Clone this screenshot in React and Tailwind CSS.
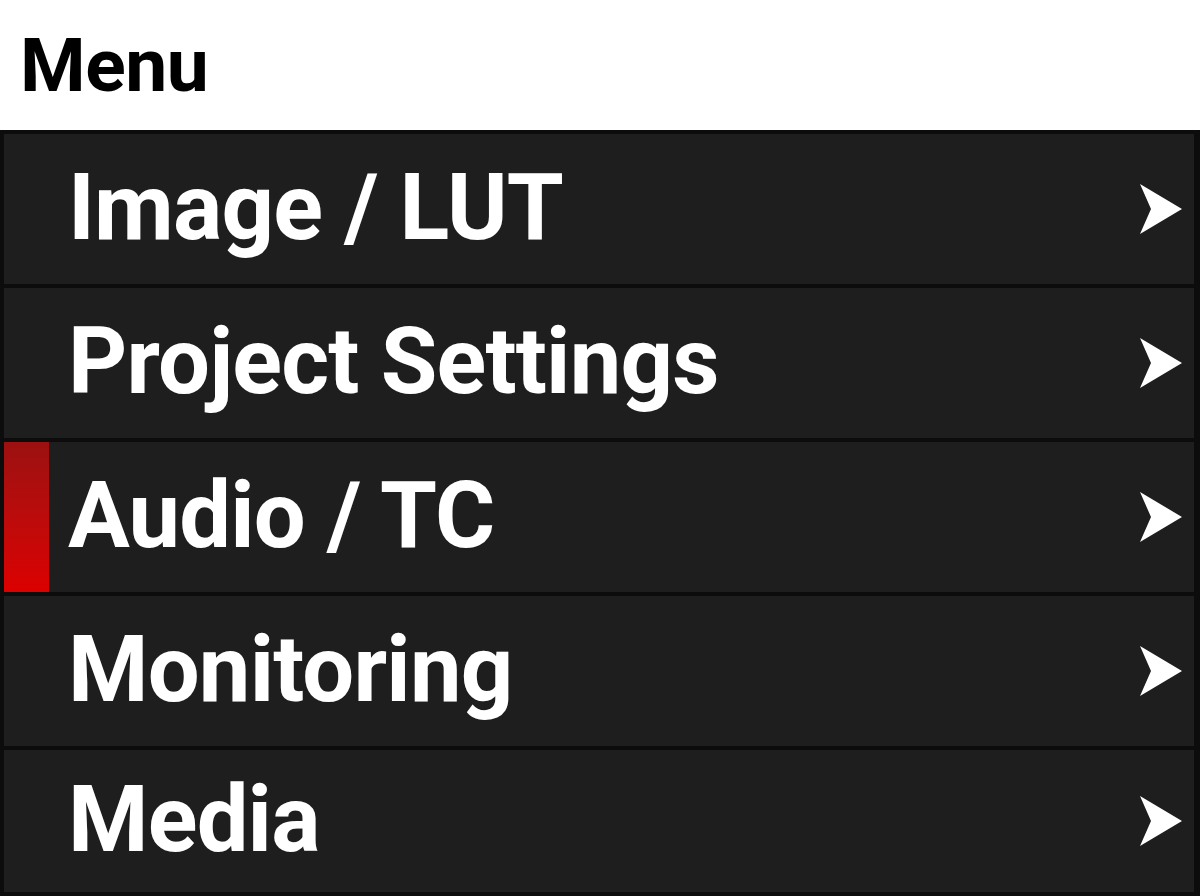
import React from "react";

const items = ["Image / LUT", "Project Settings", "Audio / TC", "Monitoring", "Media"];

function Chevron() {
  return (
    <svg width="46" height="52" viewBox="0 0 46 52" className="shrink-0">
      <polygon points="2,1 44,26 2,51 13,26" fill="#ffffff" />
    </svg>
  );
}

export default function App() {
  return (
    <div className="w-[1200px] h-[896px] bg-white overflow-hidden" style={{ fontFamily: "Roboto, 'Liberation Sans', sans-serif" }}>
      <div className="h-[130px] flex items-center pl-[20px]">
        <span className="text-[75px] font-bold text-black leading-none tracking-[-0.5px]">Menu</span>
      </div>
      <div className="border-t-4 border-l-4 border-r-[6px] border-b-4 border-[#0c0c0c] bg-[#0c0c0c] flex flex-col gap-[4px]">
        {items.map((label, i) => (
          <div
            key={label}
            className={`relative flex items-center bg-[#1e1e1e] pl-[64px] pr-[10px] ${i === items.length - 1 ? "h-[142px]" : "h-[150px]"}`}
          >
            {i === 2 && (
              <div className="absolute left-0 top-0 bottom-0 w-[45px] bg-gradient-to-b from-[#9c1010] to-[#dc0000]" />
            )}
            <span className="flex-1 text-[92px] font-bold text-white leading-none tracking-[-0.8px] -mt-[2px]">{label}</span>
            <Chevron />
          </div>
        ))}
      </div>
    </div>
  );
}
